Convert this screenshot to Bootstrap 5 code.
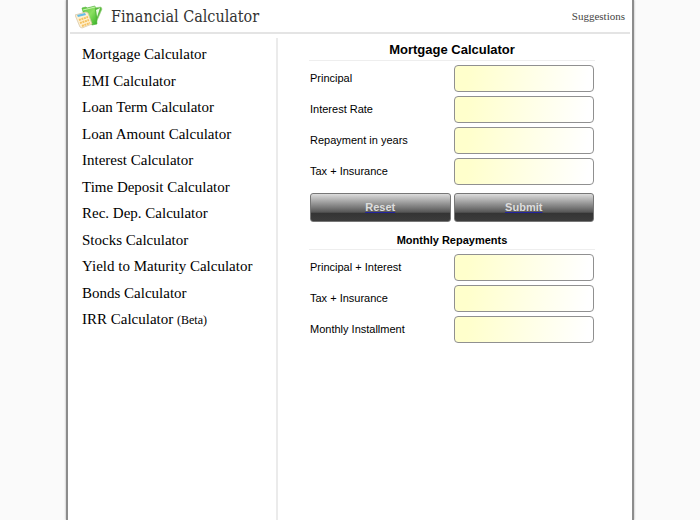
<!DOCTYPE html>
<html lang="en">
<head>
<meta charset="utf-8">
<meta name="viewport" content="width=device-width, initial-scale=1">
<title>Financial Calculator</title>
<link rel="stylesheet" href="https://cdn.jsdelivr.net/npm/bootstrap@5.3.0/dist/css/bootstrap.min.css">
<style>
  body { background: #fafafa; color: #000; font-family: "Liberation Sans", Arial, sans-serif; }
  .page-frame { max-width: 568px; border: solid #8c8c8c; border-width: 0 2px; box-shadow: 0 0 2px #aaa; padding: 0 2px; }
  .site-header { height: 34px; border-bottom: 2px solid #e4e4e4; padding: 0 5px; }
  .site-title { font-family: "DejaVu Serif Condensed", "DejaVu Serif", serif; font-size: 16px; line-height: 24px; padding-top: 2px; color: #333; }
  .suggest { font-family: "Liberation Serif", serif; font-size: 11px; color: #444; }
  .side { flex: 0 0 208px; border-right: 2px solid #ebebeb; padding: 6px 0 0 12px; }
  .calc-menu { min-height: 286px; font-family: "Liberation Serif", "Times New Roman", serif; font-size: 15px; line-height: 20px; }
  .calc-menu a { color: #000; }
  .beta { font-size: 12px; }
  .calc { max-width: 350px; padding: 0 33px 0 31px; flex: 1 1 auto; }
  .calc h2, .calc h3 { font-weight: 700; text-align: center; margin: 0; border-bottom: 1px solid #eee; }
  .calc h2 { font-size: 13px; line-height: 20px; padding-top: 2px; }
  .calc h3 { font-size: 11px; line-height: 17px; margin-top: 10px; }
  .fields { display: grid; grid-template-columns: 1fr 1fr; column-gap: 3px; row-gap: 4px; padding: 4px 1px 0; }
  .fields label { font-size: 11px; line-height: 27px; }
  .fields .form-control { height: 27px; min-height: 0; padding: 2px 6px; font-size: 12px; border: 1px solid #909090; border-radius: 4px; background: linear-gradient(100deg, #ffffcc 10%, #fff 95%); }
  .metal { height: 29px; padding: 0; border: 1px solid #777; border-radius: 3px; font-size: 11px; font-weight: 700; color: #ddd; background: linear-gradient(#dcdcdc 0, #555 68%, #343434 70%, #3c3c3c 100%); }
  .metal:hover { color: #fff; }
  .metal span { text-decoration: underline #2222a0; }
</style>
</head>
<body>
<div class="page-frame container-fluid bg-white min-vh-100 d-flex flex-column">
  <header class="site-header d-flex align-items-center">
    <svg width="28" height="26" viewBox="0 0 28 26" aria-hidden="true">
      <defs>
        <linearGradient id="leaf" x1="0" y1="0" x2="1" y2="1"><stop offset="0" stop-color="#58c03c"/><stop offset=".5" stop-color="#8be060"/><stop offset="1" stop-color="#35b025"/></linearGradient>
      </defs>
      <path d="M18 5 26 4 27 6 21 20Z" fill="#5cbb42" stroke="#9ad27f" stroke-width=".6"/>
      <path d="M21 7 25 5 22 14Z" fill="#f0fbe9"/>
      <path d="M7 5 11 4 12 5 20 3 22 21 17 22 10 16Z" fill="url(#leaf)" stroke="#4bb036" stroke-width=".6"/>
      <path d="M8 7 20 4" fill="none" stroke="#c9f3b1"/>
      <path d="M0 12 11 9 13 10 17 21 7 25 5 24Z" fill="#fff0cf" stroke="#d9c9a8" stroke-width=".8"/>
      <path d="M2 12 10 10 11 12 3 14Z" fill="#65bce8"/>
      <path d="M4 17 13 14M5 20 14 17M7 23 15 20" stroke="#f5c263" stroke-width="2" stroke-dasharray="2 .6"/>
    </svg>
    <h1 class="site-title mb-0 ms-2">Financial Calculator</h1>
    <a class="suggest ms-auto text-decoration-none" href="#">Suggestions</a>
  </header>
  <div class="d-flex flex-grow-1 pt-1">
    <nav class="side" aria-label="Calculators">
      <ul class="calc-menu list-unstyled d-flex flex-column justify-content-between mb-0 text-nowrap">
        <li><a class="text-decoration-none" href="#">Mortgage Calculator</a></li>
        <li><a class="text-decoration-none" href="#">EMI Calculator</a></li>
        <li><a class="text-decoration-none" href="#">Loan Term Calculator</a></li>
        <li><a class="text-decoration-none" href="#">Loan Amount Calculator</a></li>
        <li><a class="text-decoration-none" href="#">Interest Calculator</a></li>
        <li><a class="text-decoration-none" href="#">Time Deposit Calculator</a></li>
        <li><a class="text-decoration-none" href="#">Rec. Dep. Calculator</a></li>
        <li><a class="text-decoration-none" href="#">Stocks Calculator</a></li>
        <li><a class="text-decoration-none" href="#">Yield to Maturity Calculator</a></li>
        <li><a class="text-decoration-none" href="#">Bonds Calculator</a></li>
        <li><a class="text-decoration-none" href="#">IRR Calculator <span class="beta">(Beta)</span></a></li>
      </ul>
    </nav>
    <main class="calc">
      <form>
        <h2>Mortgage Calculator</h2>
        <div class="fields">
          <label for="principal">Principal</label><input class="form-control" id="principal" type="text">
          <label for="rate">Interest Rate</label><input class="form-control" id="rate" type="text">
          <label for="years">Repayment in years</label><input class="form-control" id="years" type="text">
          <label for="tax">Tax + Insurance</label><input class="form-control" id="tax" type="text">
          <button class="btn metal mt-1" type="reset"><span>Reset</span></button>
          <button class="btn metal mt-1" type="submit"><span>Submit</span></button>
        </div>
        <h3>Monthly Repayments</h3>
        <div class="fields">
          <label for="outPI">Principal + Interest</label><input class="form-control" id="outPI" type="text" readonly>
          <label for="outTax">Tax + Insurance</label><input class="form-control" id="outTax" type="text" readonly>
          <label for="outTotal">Monthly Installment</label><input class="form-control" id="outTotal" type="text" readonly>
        </div>
      </form>
    </main>
  </div>
</div>
<script src="https://cdn.jsdelivr.net/npm/bootstrap@5.3.0/dist/js/bootstrap.bundle.min.js"></script>
</body>
</html>
